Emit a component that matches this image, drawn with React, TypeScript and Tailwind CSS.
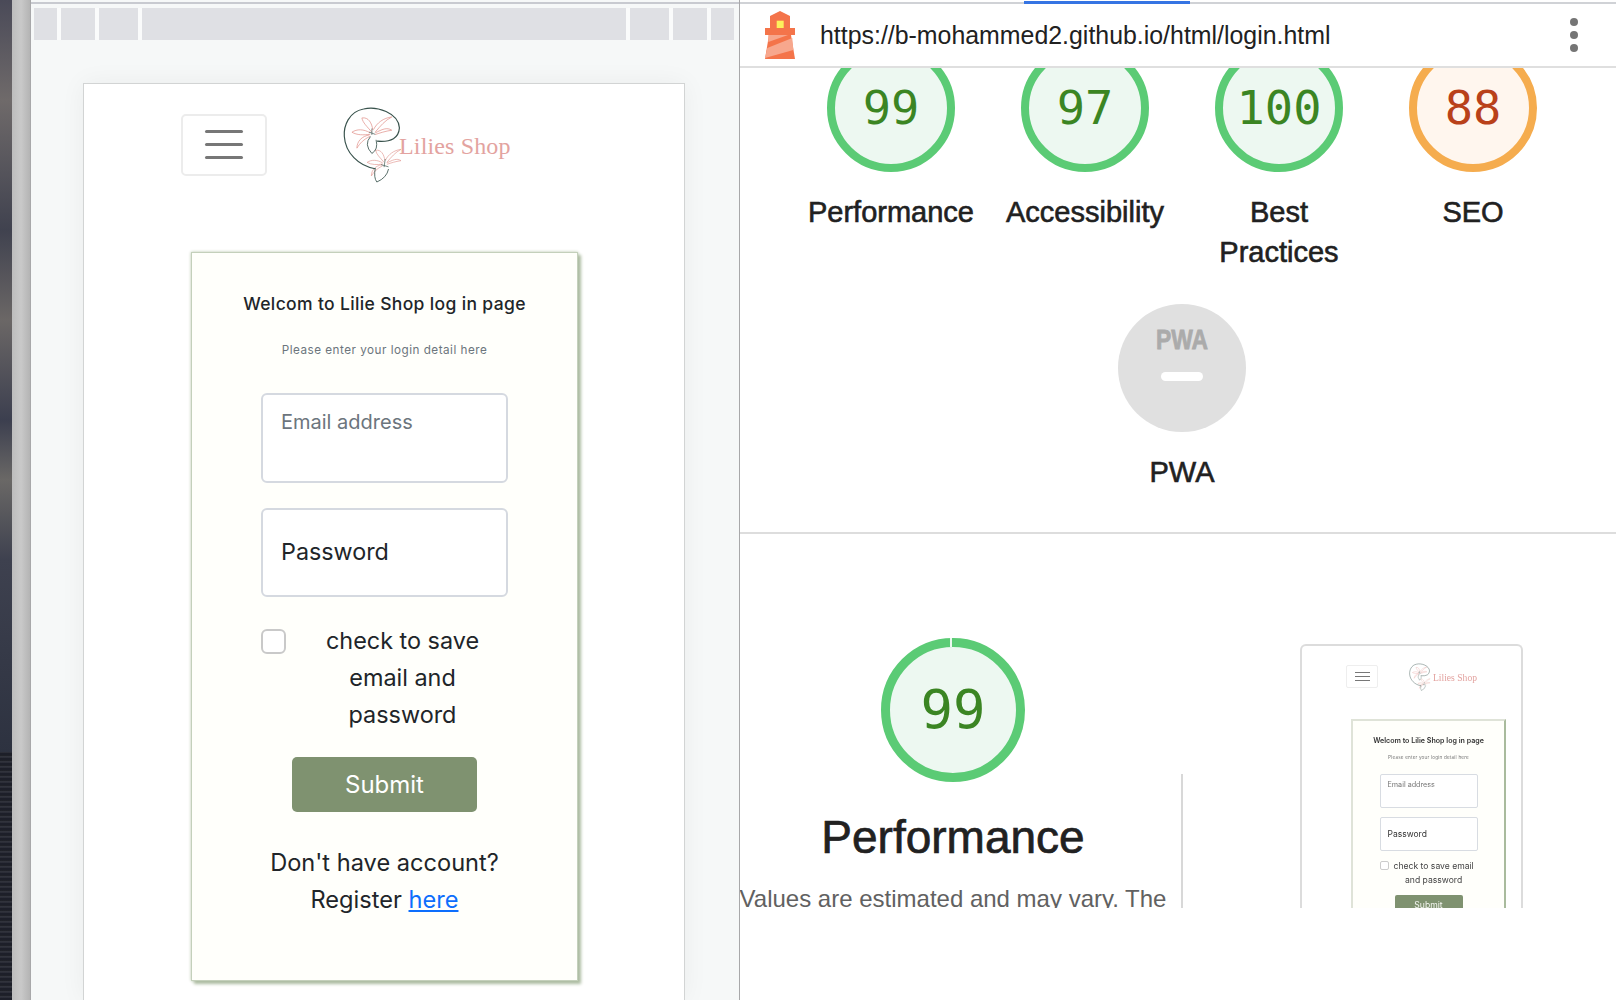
import React from 'react';

const SANS = "font-['Liberation_Sans',Arial,sans-serif]";

const LilyFlower: React.FC = () => (
  <g fill="none" stroke="#e39a94" strokeWidth="2.4">
    <path d="M155 128C140 110 128 100 125 85C145 82 155 100 158 122" />
    <path d="M160 120C170 100 190 85 215 82C195 92 180 110 165 128" />
    <path d="M165 130C185 120 200 112 215 122C195 125 180 130 165 135" />
    <path d="M150 130C130 118 110 118 95 128C110 137 130 137 150 134" />
    <path d="M148 136C125 140 110 155 110 176C120 160 130 150 150 140" />
  </g>
);

const LogoMark: React.FC<{ className: string }> = ({ className }) => (
  <svg viewBox="60 40 230 250" className={className}>
    <LilyFlower />
    <g transform="translate(60 110) scale(0.85)">
      <LilyFlower />
    </g>
    <g fill="none" stroke="#38524c" strokeLinecap="round">
      <path strokeWidth="3.5" d="M172 155Q235 160 238 115C235 70 170 48 130 58C85 66 70 110 72 140C75 190 115 230 165 238" />
      <path strokeWidth="2.5" d="M150 142Q130 165 155 192Q175 180 168 152" />
      <path strokeWidth="2.5" d="M165 238Q160 265 170 278Q200 265 205 240" />
      <path strokeWidth="2" d="M155 118L155 135M148 128L164 134M195 210L192 232M184 226L204 232" />
    </g>
  </svg>
);

const Gauge: React.FC<{ value: number; track: string; fill: string; text: string }> = ({ value, track, fill, text }) => (
  <div className={`w-32 h-32 rounded-full border-8 flex items-center justify-center shrink-0 ${track} ${fill}`}>
    <span className={`pb-[2px] font-['DejaVu_Sans_Mono',monospace] text-[47px] leading-none ${text}`}>{value}</span>
  </div>
);

const categories = [
  { value: 99, label: 'Performance', track: 'border-[#5bcb75]', fill: 'bg-[#edf8f1]', text: 'text-[#3b8523]' },
  { value: 97, label: 'Accessibility', track: 'border-[#5bcb75]', fill: 'bg-[#edf8f1]', text: 'text-[#3b8523]' },
  { value: 100, label: 'Best Practices', track: 'border-[#5bcb75]', fill: 'bg-[#edf8f1]', text: 'text-[#3b8523]' },
  { value: 88, label: 'SEO', track: 'border-[#f5ac4e]', fill: 'bg-[#fff6ee]', text: 'text-[#b9411a]' },
];

const LoginPreview: React.FC = () => (
  <div className="mt-[110px] ml-[117px] w-[223px] h-[264px] shrink-0 overflow-hidden border-2 border-b-0 border-[#dcdcdc] rounded-t-md bg-white font-['Inter',sans-serif] blur-[0.4px]">
    <div className="flex items-center pl-[44px] pt-[5px] h-[56px]">
      <div className="w-[32px] h-[23px] border border-[#eeeeee] rounded-[2px] flex flex-col items-center justify-center gap-[3px]">
        <span className="w-[15px] h-px bg-[#777777]" />
        <span className="w-[15px] h-px bg-[#777777]" />
        <span className="w-[15px] h-px bg-[#777777]" />
      </div>
      <LogoMark className="ml-[30px] w-[28px] h-[30px]" />
      <span className="-ml-[3px] mt-[3px] font-['Liberation_Serif',serif] text-[9.6px] text-[#e3a3a0]">Lilies Shop</span>
    </div>
    <div className="ml-[49px] mt-[17px] w-[155px] h-[230px] bg-[#fffffb] border-t-2 border-l-2 border-t-[#dfe3d8] border-l-[#dfe3d8] border-r-2 border-r-[#a9bb9d] flex flex-col items-center">
      <p className="mt-[15px] text-[7.1px] font-semibold leading-[10px] text-[#333333]">Welcom to Lilie Shop log in page</p>
      <p className="mt-[9px] text-[4.6px] leading-[6px] tracking-[0.2px] text-[#777777]">Please enter your login detail here</p>
      <div className="mt-[13px] w-[98px] h-[34px] border border-[#d8dce2] rounded-[2px] bg-white pl-[7px] pt-[5px] text-[7.2px] leading-[10px] text-[#777777]">Email address</div>
      <div className="mt-[9px] w-[98px] h-[34px] border border-[#d8dce2] rounded-[2px] bg-white pl-[7px] flex items-center text-[8.5px] text-[#333333]">Password</div>
      <div className="mt-[8px] w-[98px] flex items-start text-[8.6px] leading-[14px] text-[#444444]">
        <span className="mt-[2px] w-[9px] h-[9px] shrink-0 border border-[#cccccc] rounded-[2px] bg-white" />
        <span className="ml-[5px] text-center whitespace-nowrap">check to save email<br />and password</span>
      </div>
      <div className="mt-[8px] w-[68px] h-[20px] bg-[#7f9270] rounded-[2px] text-center text-[8.6px] leading-[20px] text-[#f4f6f1]">Submit</div>
    </div>
  </div>
);

const App: React.FC = () => {
  return (
    <div className={`w-[1616px] h-[1000px] overflow-hidden flex bg-white ${SANS}`}>
      {/* Desktop edge and window shadow */}
      <div className="w-3 h-full shrink-0 flex flex-col">
        <div className="h-[752px] bg-[linear-gradient(180deg,#4a4a58_0px,#6f6a6a_100px,#40424f_230px,#6b6766_320px,#3c3f4f_420px,#6a6866_480px,#3e414f_560px,#2d3240_752px)]" />
        <div className="flex-1 bg-[repeating-linear-gradient(0deg,#1d1f29_0px,#1d1f29_2px,#3a3c46_3px,#17191f_5px)]" />
      </div>
      <div className="w-[18px] h-full shrink-0 bg-gradient-to-r from-[#bdbdbd] via-[#c9c9c9] to-[#b4b4b4]" />

      {/* Device preview pane */}
      <div className="w-[710px] h-full shrink-0 bg-[#f6f8f8] border-l border-r border-[#a8a8aa] flex flex-col">
        <div className="h-[2px] mt-[2px] bg-[#c8cad0]" />
        <div className="mt-1 ml-[3px] mr-[5px] h-[32px] flex bg-[#dfe0e4]">
          <div className="w-[23px]" />
          <div className="w-[4px] bg-[#fafbfb]" />
          <div className="w-[34px]" />
          <div className="w-[4px] bg-[#fafbfb]" />
          <div className="w-[39px]" />
          <div className="w-[4px] bg-[#fafbfb]" />
          <div className="w-[484px]" />
          <div className="w-[4px] bg-[#fafbfb]" />
          <div className="w-[39px]" />
          <div className="w-[4px] bg-[#fafbfb]" />
          <div className="w-[34px]" />
          <div className="w-[4px] bg-[#fafbfb]" />
        </div>

        <div className="ml-[52px] mt-[43px] w-[602px] flex-1 bg-white border border-b-0 border-[#d2d4d4] shadow-[0_0_24px_rgba(0,0,0,0.05)] flex flex-col items-start font-['Inter',sans-serif]">
          <div className="mt-[19px] ml-[97px] flex items-center">
            <div className="w-[86px] h-[62px] rounded-[5px] border-2 border-[#ececec] flex flex-col items-center justify-center gap-[10px]">
              <span className="w-[38px] h-[3px] bg-[#777777] rounded-full" />
              <span className="w-[38px] h-[3px] bg-[#777777] rounded-full" />
              <span className="w-[38px] h-[3px] bg-[#777777] rounded-full" />
            </div>
            <LogoMark className="ml-[73px] w-[77px] h-[83px]" />
            <span className="-ml-[18px] mt-[2px] font-['Liberation_Serif',serif] text-[24px] tracking-[0.15px] text-[#e3a3a0]">Lilies Shop</span>
          </div>

          {/* Login form */}
          <div className="mt-[66px] ml-[107px] w-[387px] h-[729px] shrink-0 bg-[#fffffb] border border-[#c4d0bb] shadow-[3px_3px_3px_#aebda3,0_0_3px_#b8c6ad] flex flex-col items-center text-[#212529]">
            <h1 className="mt-[39px] text-[17.5px] leading-[24px] font-medium tracking-[0.35px]">Welcom to Lilie Shop log in page</h1>
            <p className="mt-[25px] text-[11.7px] leading-[18px] tracking-[0.5px] text-[#6c757d]">Please enter your login detail here</p>
            <div className="mt-[34px] w-[247px] h-[90px] rounded-[6px] border-2 border-[#d5d9e0] bg-white pl-[18px] pt-[13px] text-[20px] leading-[28px] text-[#6c757d]">Email address</div>
            <div className="mt-[25px] w-[247px] h-[89px] rounded-[6px] border-2 border-[#d5d9e0] bg-white pl-[18px] flex items-center text-[23.3px] text-[#212529]">Password</div>
            <div className="mt-[25px] w-[247px] flex items-start text-[23.4px] leading-[37px]">
              <span className="mt-[7px] w-[25px] h-[25px] shrink-0 rounded-[6px] border-2 border-[#c9c9c9] bg-white" />
              <span className="flex-1 pl-[11px] text-center">check to save email and password</span>
            </div>
            <button className="mt-[24px] w-[185px] h-[55px] rounded-[5px] bg-[#7f9270] text-[24px] text-white">Submit</button>
            <p className="mt-[32px] w-[246px] text-center text-[23.6px] leading-[37px]">
              Don't have account? Register <a className="text-[#0d6efd] underline">here</a>
            </p>
          </div>
        </div>
      </div>

      {/* Lighthouse report pane */}
      <div className="flex-1 h-full flex flex-col min-w-0">
        <div className="h-[4px] shrink-0 flex items-start border-b-2 border-[#d0d2d6]">
          <div className="ml-[284px] mt-[1px] w-[166px] h-[3px] bg-[#3574e3]" />
        </div>
        <div className="h-[64px] shrink-0 bg-white border-b-2 border-[#dfdfdf] flex items-center pl-[25px] pr-[38px]">
          <svg viewBox="0 0 30 48" className="w-[30px] h-[48px] shrink-0">
            <path fill="#f4744a" d="M5 24V5L15 0L25 5V24Z" />
            <rect fill="#fdf15c" x="11.700" y="9.700" width="7" height="7.600" />
            <rect fill="#f4744a" x="0" y="17" width="30" height="7" />
            <path fill="#f4744a" d="M4 24H26L30 48H0Z" />
            <path fill="#f7a78d" d="M3.300 24H23L3.300 31Z" />
            <path fill="#f7a78d" d="M2.300 37L27.300 27L28.300 39L0 47Z" />
          </svg>
          <span className="ml-[25px] pt-[2px] text-[24.9px] text-[#212121]">https://b-mohammed2.github.io/html/login.html</span>
          <div className="ml-auto flex flex-col gap-[5px]">
            <span className="w-2 h-2 rounded-full bg-[#757575]" />
            <span className="w-2 h-2 rounded-full bg-[#757575]" />
            <span className="w-2 h-2 rounded-full bg-[#757575]" />
          </div>
        </div>

        <div className="h-[466px] shrink-0 overflow-hidden border-b-2 border-[#dddddd]">
          <div className="pl-[54px] -mt-[24px] flex">
            {categories.map((c) => (
              <div key={c.label} className="w-[194px] flex flex-col items-center">
                <Gauge value={c.value} track={c.track} fill={c.fill} text={c.text} />
                <p className="mt-[20px] w-[172px] text-center text-[29px] leading-[40px] text-[#212121] [-webkit-text-stroke:0.6px_#212121]">{c.label}</p>
              </div>
            ))}
          </div>
          <div className="mt-[32px] flex flex-col items-center pl-[8px]">
            <div className="w-32 h-32 rounded-full bg-[#e0e0e0] flex flex-col items-center">
              <svg viewBox="0 0 52 22" className="mt-[24px] w-[52px] h-[22px] overflow-visible">
                <text x="0" y="21" textLength="52" lengthAdjust="spacingAndGlyphs" fill="#ababab" stroke="#ababab" strokeWidth="0.8" fontFamily="Liberation Sans" fontWeight="700" fontSize="28">PWA</text>
              </svg>
              <span className="mt-[22px] w-[42px] h-[9px] rounded-full bg-white" />
            </div>
            <p className="mt-[20px] text-center text-[29px] leading-[40px] text-[#212121] [-webkit-text-stroke:0.6px_#212121]">PWA</p>
          </div>
        </div>

        {/* Performance detail, cut off at the fold */}
        <div className="h-[374px] shrink-0 overflow-hidden flex">
          <div className="w-[441px] h-full shrink-0 pr-[15px] flex flex-col items-center overflow-hidden">
            <div className="mt-[104px] w-36 h-36 rounded-full border-[9px] border-[#5bcb75] bg-[#edf8f1] flex items-center justify-center shrink-0 relative">
              <span className="absolute -top-[9px] left-1/2 -ml-[3px] w-[2px] h-[9px] bg-[#edf8f1]" />
              <span className="font-['DejaVu_Sans_Mono',monospace] text-[54px] leading-none text-[#3b8523]">99</span>
            </div>
            <h2 className="mt-[28px] text-[46px] leading-[54px] text-[#212121] whitespace-nowrap [-webkit-text-stroke:0.7px_#212121]">Performance</h2>
            <p className="mt-[17px] text-[24px] leading-[36px] text-[#616161] whitespace-nowrap">Values are estimated and may vary. The</p>
          </div>
          <div className="mt-[240px] w-[2px] h-[134px] shrink-0 bg-[#d8d8d8]" />
          <LoginPreview />
        </div>
      </div>
    </div>
  );
};

export default App;
